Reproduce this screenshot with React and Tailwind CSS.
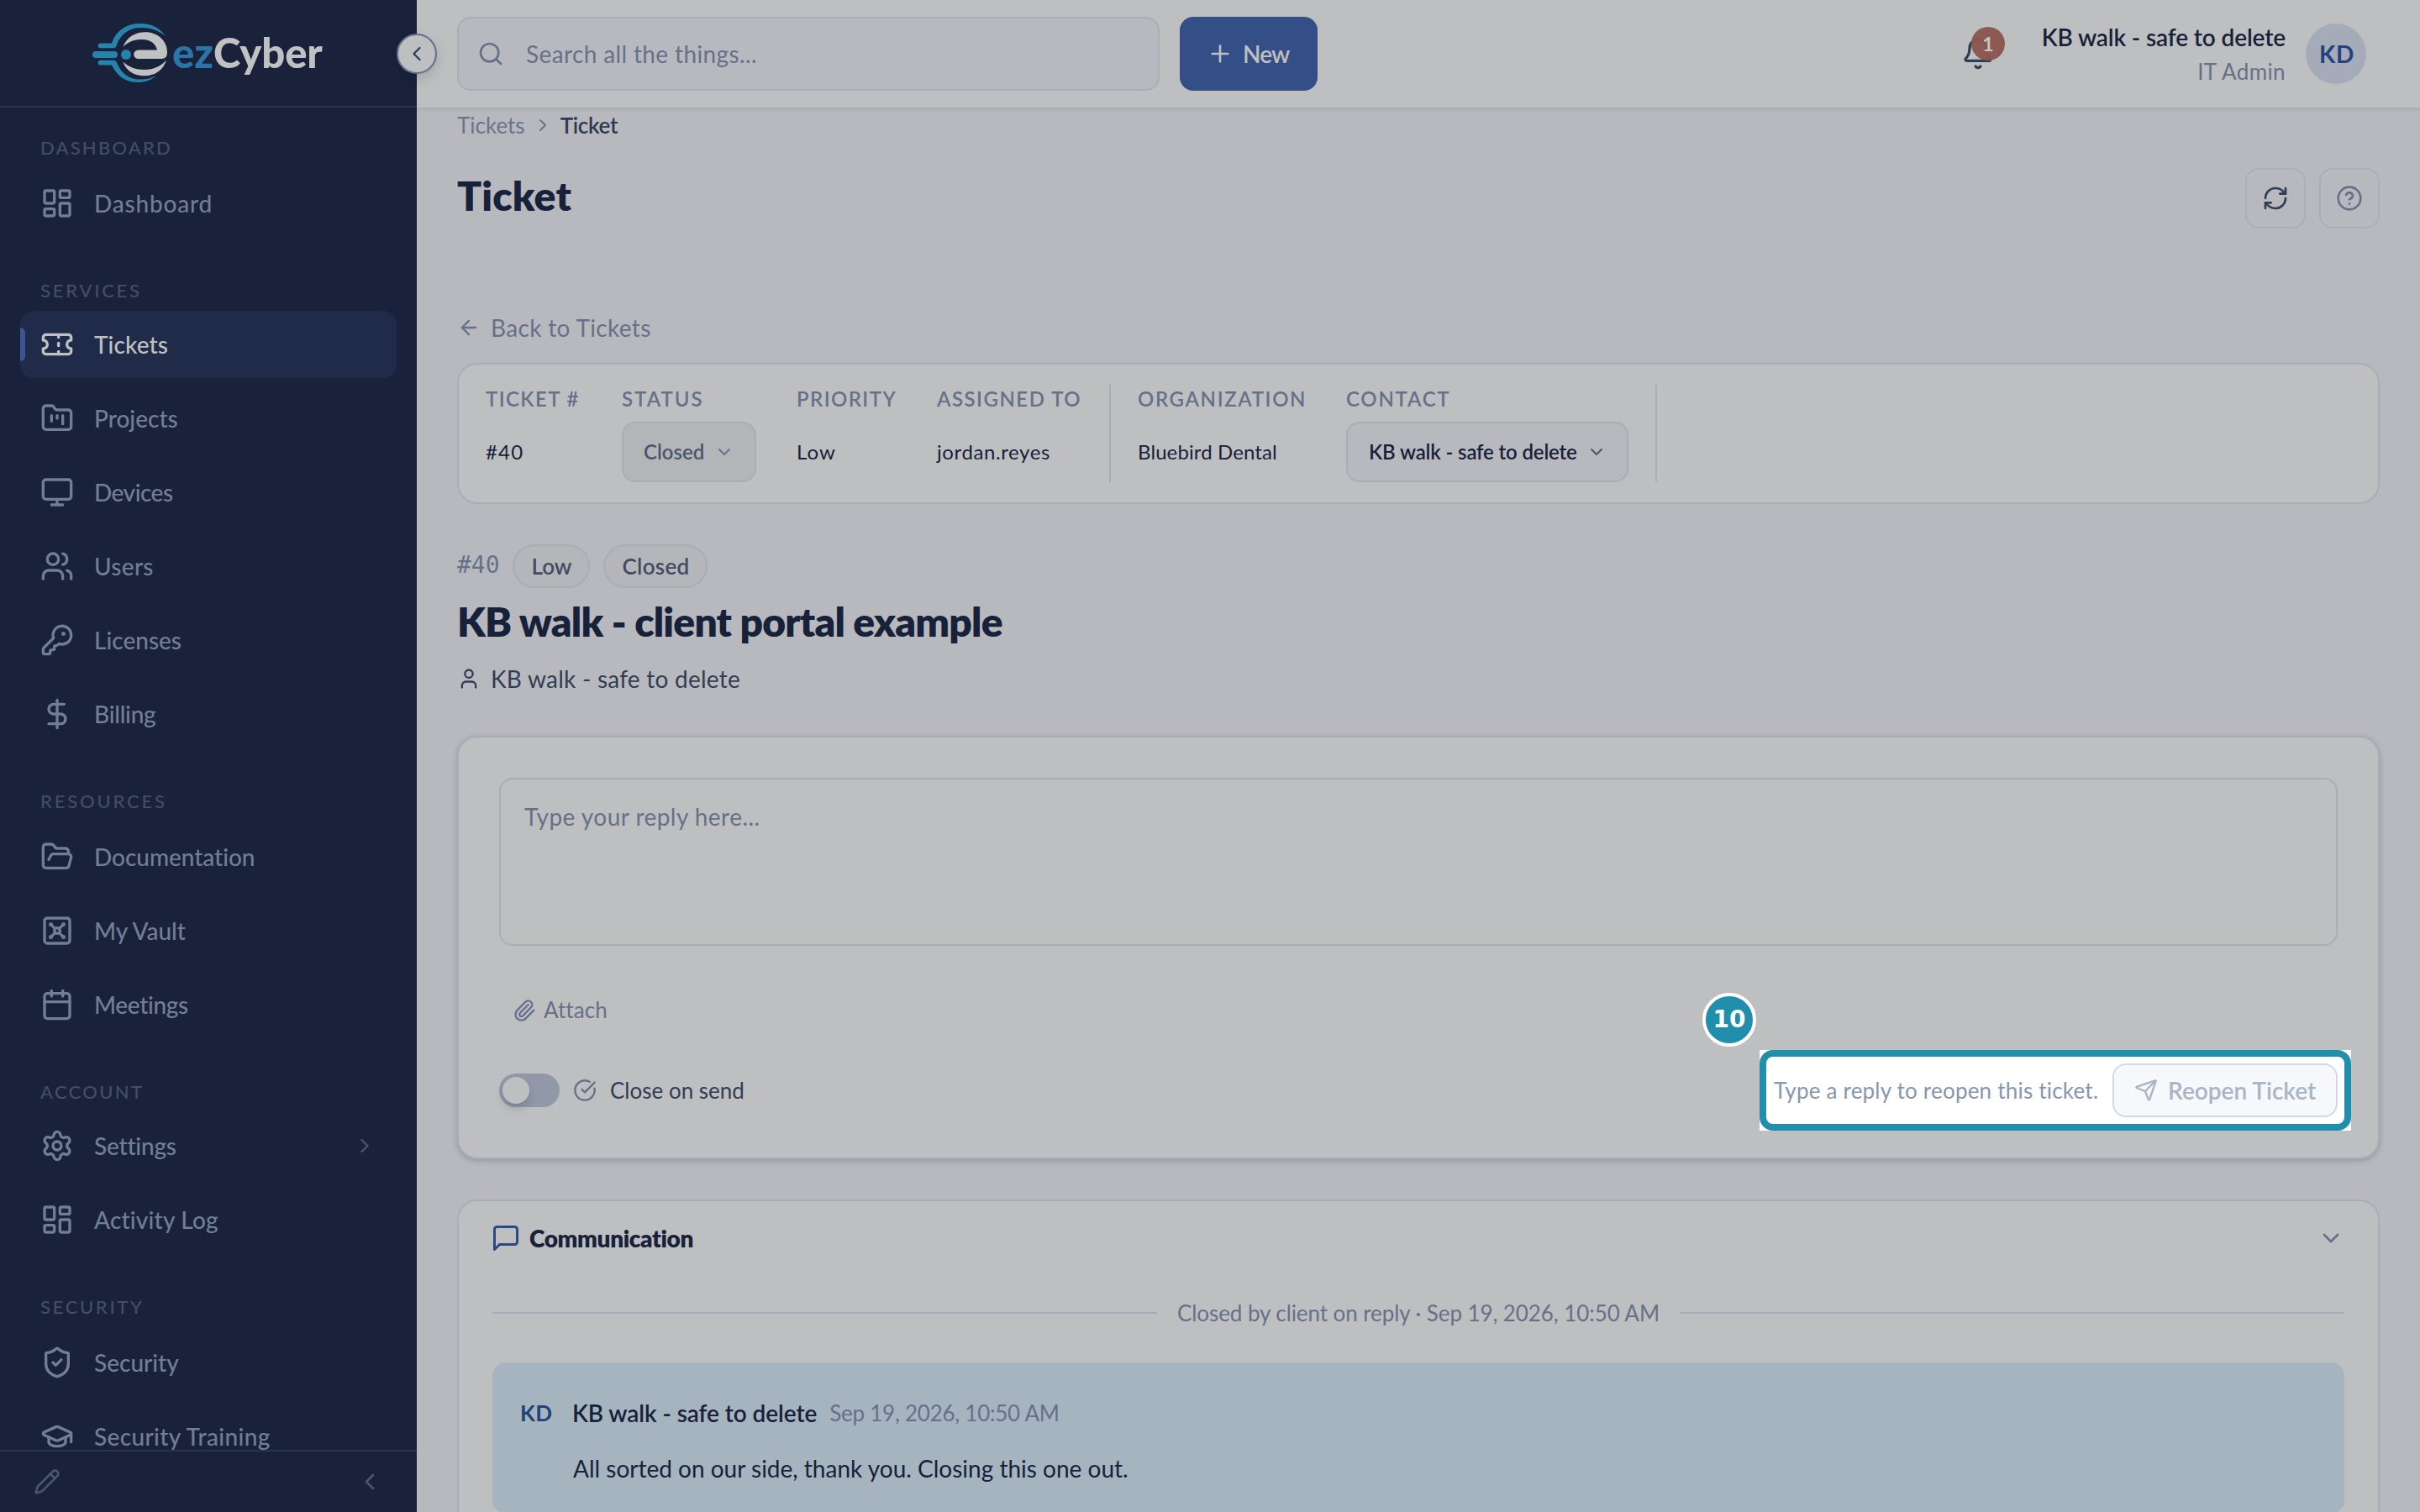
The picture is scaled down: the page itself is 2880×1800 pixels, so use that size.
import {
  ArrowLeft, Bell, Calendar, ChevronDown, ChevronLeft, ChevronRight, CircleCheckBig, CircleHelp,
  DollarSign, FolderKanban, FolderOpen, GraduationCap, KeyRound, LayoutDashboard, Monitor,
  Paperclip, Pencil, Plus, RefreshCw, Search, Send, Settings, ShieldCheck, Ticket, User, Users, Vault,
} from "lucide-react";

const sections = [
  {
    title: "DASHBOARD",
    heading: "mb-0.5 tracking-[2.2px]",
    items: [{ name: "Dashboard", icon: LayoutDashboard, tracking: "tracking-[0.8px]" }],
  },
  {
    title: "SERVICES",
    heading: "tracking-[2.76px]",
    items: [
      { name: "Tickets", icon: Ticket, active: true, tracking: "tracking-[0.1px]" },
      { name: "Projects", icon: FolderKanban, tracking: "tracking-[0px]" },
      { name: "Devices", icon: Monitor, tracking: "tracking-[-0.5px]" },
      { name: "Users", icon: Users, tracking: "tracking-[0.3px]" },
      { name: "Licenses", icon: KeyRound, tracking: "tracking-[0px]" },
      { name: "Billing", icon: DollarSign, tracking: "tracking-[-0.25px]" },
    ],
  },
  {
    title: "RESOURCES",
    heading: "mb-0.5 tracking-[2.82px]",
    items: [
      { name: "Documentation", icon: FolderOpen, tracking: "tracking-[-0.04px]" },
      { name: "My Vault", icon: Vault, tracking: "tracking-[-0.05px]" },
      { name: "Meetings", icon: Calendar, tracking: "tracking-[-0.35px]" },
    ],
  },
  {
    title: "ACCOUNT",
    heading: "tracking-[2.33px]",
    items: [
      { name: "Settings", icon: Settings, more: true, tracking: "tracking-[-0.2px]" },
      { name: "Activity Log", icon: LayoutDashboard, tracking: "tracking-[0.2px]" },
    ],
  },
  {
    title: "SECURITY",
    heading: "mb-0.5 tracking-[2.66px]",
    items: [
      { name: "Security", icon: ShieldCheck, tracking: "tracking-[0px]" },
      { name: "Security Training", icon: GraduationCap, tracking: "tracking-[0.36px]" },
    ],
  },
];

function Logo() {
  return (
    <div className="flex items-center">
      <svg width="92" height="74" viewBox="109 26 92 74">
        <g fill="#2583ac">
          <path d="M119.500 51.500H133C138 36 151 28 167 28C180 28 190 33 197 43C188 36 179 33 168 33C153 33 143 41 138.500 54.500C138 56.500 137 57.200 135 57.200H119.500A2.850 2.850 0 0 1 119.500 51.500Z" />
          <path d="M119.500 71.800H135C137 71.800 138 72.500 139 74.500C144 87 153 94.500 167 94.500C174 94.500 180 93 186 90C180 95.500 173 98 163 98C149 97.500 139 90.500 133 77.500H119.500A2.850 2.850 0 0 1 119.500 71.800Z" />
          <rect x="110" y="61" width="30" height="8" rx="4" />
          <circle cx="150" cy="65" r="6" />
        </g>
        <g fill="#bfc1c2">
          <path d="M146.500 55.500C151 44 161 38.300 173 38.300C188 38.300 199 49 199 62C199 67 197 70 192 70H164.500A5.300 5.300 0 0 1 164.500 59.400H187C185 51 178 47 169 47C160 47 153 49.500 146.500 55.500Z" />
          <path d="M146.500 73.500C153 80 162 83 172 83C183 83 191 79 198 71.500C194 84 184 90.300 172 90.300C160 90.300 150 84.500 146.500 73.500Z" />
        </g>
      </svg>
      <div className="ml-[4px] pb-[2px] text-[49px] leading-none font-black whitespace-nowrap">
        <span className="text-[#2b74a8]">ez</span>
        <span className="tracking-[-0.1px] text-[#bfc1c2]">Cyber</span>
      </div>
    </div>
  );
}

function Sidebar() {
  return (
    <aside className="relative flex h-full w-[496px] shrink-0 flex-col bg-[#19223a]">
      <div className="flex h-32 shrink-0 items-center border-b-2 border-[#28334f] pl-[109px]">
        <Logo />
      </div>
      <nav className="min-h-0 flex-1 overflow-hidden px-6 pt-6">
        {sections.map((section) => (
          <div key={section.title} className="mb-10">
            <div className={`flex h-12 items-center pb-[2px] pl-6 text-[22px] font-medium text-[#434e66] ${section.heading}`}>
              {section.title}
            </div>
            <div className="flex flex-col gap-2">
              {section.items.map((item) => (
                <div
                  key={item.name}
                  className={
                    item.active
                      ? "relative flex h-20 items-center overflow-hidden rounded-2xl bg-[#202b4a] px-6 text-[#bfc0c1]"
                      : "relative flex h-20 items-center px-6 text-[#717e95]"
                  }
                >
                  {item.active && <span className="absolute left-0 top-5 h-10 w-1.5 rounded-r-md bg-[#3f5591]" />}
                  <item.icon size={40} className="shrink-0" />
                  <span className={`ml-6 text-[28px] font-medium ${item.tracking}`}>{item.name}</span>
                  {item.more && <ChevronRight size={28} className="ml-auto text-[#4b566e]" />}
                </div>
              ))}
            </div>
          </div>
        ))}
      </nav>
      <div className="flex h-[74px] shrink-0 items-center justify-between border-t-2 border-[#28334f] pl-10 pr-10 text-[#4b566e]">
        <Pencil size={32} />
        <ChevronLeft size={32} />
      </div>
      <button className="absolute -right-6 top-10 z-10 flex size-12 items-center justify-center rounded-full border-2 border-[#667189] bg-[#bebfc0] text-[#313c55] shadow-[0_6px_14px_rgba(15,23,42,0.16)]">
        <ChevronLeft size={28} />
      </button>
    </aside>
  );
}

function Topbar() {
  return (
    <header className="flex h-32 shrink-0 items-center justify-between bg-[#bebfc0] pl-12 pr-16 shadow-[0_2px_4px_rgba(60,65,85,0.12)]">
      <div className="flex items-center gap-6">
        <div className="flex h-[88px] w-[836px] items-center rounded-2xl border-2 border-[#a9adb8] bg-[#b8b9be] pl-[22px] text-[#667189]">
          <Search size={32} />
          <span className="ml-[26px] text-[28px] tracking-[0.37px]">Search all the things...</span>
        </div>
        <button className="flex h-[88px] w-[164px] items-center rounded-2xl bg-[#344f87] pl-8 text-[#bebfc0]">
          <Plus size={32} />
          <span className="ml-[11px] text-[28px] font-semibold tracking-[-0.9px]">New</span>
        </button>
      </div>
      <div className="flex items-center">
        <div className="relative mr-14 text-[#313c55]">
          <Bell size={40} />
          <span className="absolute left-[12px] top-[-12px] flex size-10 items-center justify-center rounded-full bg-[#8a564f]/97 text-[23px] font-bold text-[#c9c4c0]">
            1
          </span>
        </div>
        <div className="flex w-[290px] flex-col items-end whitespace-nowrap">
          <span className="text-[28px] leading-[42px] font-semibold tracking-[-0.12px] text-[#17213a]">KB walk - safe to delete</span>
          <span className="text-[26px] leading-[40px] tracking-[0.4px] text-[#667189]">IT Admin</span>
        </div>
        <div className="ml-6 flex size-[72px] items-center justify-center rounded-full bg-[#a5abb9] pl-[2px] text-[28px] font-bold tracking-[0.8px] text-[#23427d]">
          KD
        </div>
      </div>
    </header>
  );
}

function Field({ label, tracking, width, children }) {
  return (
    <div className={`flex flex-col ${width}`}>
      <span className={`flex h-8 items-center pt-[2px] text-[24px] font-semibold whitespace-nowrap text-[#667189] ${tracking}`}>{label}</span>
      <div className="mt-3 flex h-[72px] items-center text-[24px] whitespace-nowrap text-[#17213a]">{children}</div>
    </div>
  );
}

function TicketInfo() {
  return (
    <div className="mt-[22px] flex h-[168px] rounded-3xl border-2 border-[#a8aeb8] bg-[#bebfc0] pl-8 pt-6">
      <div className="flex gap-12">
        <Field label="TICKET #" width="w-[114px]" tracking="tracking-[1.4px]">
          <span className="tracking-[1.2px]">#40</span>
        </Field>
        <Field label="STATUS" width="w-[160px]" tracking="tracking-[2px]">
          <div className="flex h-full w-full items-center justify-between rounded-2xl border-2 border-[#a9adb7] bg-[#b4b5b9] pl-6 pr-6 text-[#4a566e]">
            <span className="font-semibold">Closed</span>
            <ChevronDown size={24} className="text-[#667189]" />
          </div>
        </Field>
        <Field label="PRIORITY" width="w-[119px]" tracking="tracking-[1.4px]">
          <span className="tracking-[1px]">Low</span>
        </Field>
        <Field label="ASSIGNED TO" width="w-[173px]" tracking="tracking-[1.48px]">
          <span className="tracking-[0.6px]">jordan.reyes</span>
        </Field>
      </div>
      <div className="ml-8 h-[116px] w-0.5 bg-[#a8aeb8]" />
      <div className="ml-8 flex gap-12">
        <Field label="ORGANIZATION" width="w-[200px]" tracking="tracking-[1.62px]">
          <span className="tracking-[0.1px]">Bluebird Dental</span>
        </Field>
        <Field label="CONTACT" width="w-[336px]" tracking="tracking-[1.75px]">
          <div className="flex h-full w-full items-center justify-between rounded-2xl border-2 border-[#a9adb7] bg-[#b8b9be] pl-[25px] pr-6">
            <span className="font-semibold tracking-[-0.15px]">KB walk - safe to delete</span>
            <ChevronDown size={24} className="text-[#4a566e]" />
          </div>
        </Field>
      </div>
      <div className="ml-8 h-[116px] w-0.5 bg-[#a8aeb8]" />
    </div>
  );
}

function ReplyBox() {
  return (
    <div className="mt-12 rounded-3xl border-2 border-[#a8aeb8] bg-[#bebfc0] p-12 shadow-[0_2px_6px_rgba(50,58,80,0.28)]">
      <div className="h-[200px] rounded-2xl border-2 border-[#a8aeb8] px-7 pt-6 text-[28px] leading-10 tracking-[0.46px] text-[#667189]">
        Type your reply here...
      </div>
      <div className="mt-12 flex h-14 items-center pl-4 pt-[1px] text-[#667189]">
        <Paperclip size={28} />
        <span className="ml-[9px] text-[26px] tracking-[0.1px]">Attach</span>
      </div>
      <div className="mt-9 flex h-16 items-center justify-between">
        <div className="flex items-center">
          <div className="flex h-10 w-[72px] items-center rounded-full bg-[#9199a9] pl-1">
            <div className="size-8 rounded-full bg-[#bebfc0] shadow-[0_6px_10px_rgba(30,40,60,0.2)]" />
          </div>
          <CircleCheckBig size={28} className="ml-4 text-[#667189]" />
          <span className="ml-4 text-[26px] text-[#313c55]">Close on send</span>
        </div>
        <div className="relative flex items-center">
          <div className="absolute -inset-4 bg-white">
            <div className="h-full w-full rounded-2xl border-8 border-[#218eac]" />
          </div>
          <span className="relative w-[404px] pl-[1px] text-[26px] tracking-[0.21px] whitespace-nowrap text-[#8696ae]">
            Type a reply to reopen this ticket.
          </span>
          <button className="relative flex h-16 w-[268px] items-center rounded-2xl border-2 border-[#d0d9e7] bg-[#f6f8fc] pl-6 text-[#a9b5c3]">
            <Send size={28} />
            <span className="ml-[12px] text-[28px] font-semibold tracking-[0.02px]">Reopen Ticket</span>
          </button>
          <span className="absolute left-[-84px] top-[-84px] flex size-16 items-center justify-center rounded-full border-4 border-white bg-[#218eac] font-['DejaVu_Sans'] text-[28px] font-bold text-white">
            10
          </span>
        </div>
      </div>
    </div>
  );
}

function Communication() {
  return (
    <div className="mt-12 h-[460px] rounded-3xl border-2 border-[#a8aeb8] bg-[#bebfc0] px-10">
      <div className="flex h-[88px] items-center">
        <svg width="36" height="36" viewBox="0 0 24 24" fill="none" stroke="#2a4a85" strokeWidth="2" strokeLinecap="round" strokeLinejoin="round" className="-ml-0.5">
          <path d="M21 15a2 2 0 0 1-2 2H7l-4 4V5a2 2 0 0 1 2-2h14a2 2 0 0 1 2 2z" />
        </svg>
        <span className="ml-[10px] text-[28px] font-extrabold tracking-[-0.36px] text-[#17213a]">Communication</span>
        <ChevronDown size={32} className="ml-auto text-[#667189]" />
      </div>
      <div className="mt-[25px] flex h-10 items-center gap-6">
        <div className="h-0.5 flex-1 bg-[#a8aeb8]" />
        <span className="w-[574px] text-[26px] tracking-[-0.08px] whitespace-nowrap text-[#667189]">
          Closed by client on reply · Sep 19, 2026, 10:50 AM
        </span>
        <div className="h-0.5 flex-1 bg-[#a8aeb8]" />
      </div>
      <div className="mt-[39px] flex h-[180px] rounded-2xl bg-[#a6b4bf] pl-[33px] pt-10">
        <span className="w-[62px] text-[26px] leading-10 font-bold tracking-[0.4px] text-[#1f4379]">KD</span>
        <div>
          <div className="flex items-center text-[28px] leading-10">
            <span className="font-semibold tracking-[-0.08px] text-[#17213a]">KB walk - safe to delete</span>
            <span className="ml-[15px] text-[26px] tracking-[-0.25px] text-[#667189]">Sep 19, 2026, 10:50 AM</span>
          </div>
          <p className="mt-6 pl-[1px] text-[28px] leading-[44px] text-[#17213a]">All sorted on our side, thank you. Closing this one out.</p>
        </div>
      </div>
    </div>
  );
}

export default function App() {
  return (
    <div className="flex h-[1800px] w-[2880px] overflow-hidden bg-[#b8b9be] font-['Lato','Open_Sans',sans-serif]">
      <Sidebar />
      <div className="flex min-w-0 flex-1 flex-col">
        <Topbar />
        <main className="min-h-0 flex-1 overflow-hidden px-12 pt-[5px]">
          <div className="flex h-8 items-center text-[26px] text-[#6b7589]">
            <span>Tickets</span>
            <ChevronRight size={24} className="ml-[9px]" />
            <span className="ml-[9px] font-semibold tracking-[-0.3px] text-[#2f3a52]">Ticket</span>
          </div>
          <div className="mt-[35px] flex h-[72px] items-center justify-between">
            <h1 className="pb-[7px] text-[48px] leading-none font-extrabold tracking-[0.2px] text-[#17213a]">Ticket</h1>
            <div className="flex gap-4">
              <button className="flex size-[72px] items-center justify-center rounded-2xl border-2 border-[#a9aeb8] text-[#313c55]">
                <RefreshCw size={32} />
              </button>
              <button className="flex size-[72px] items-center justify-center rounded-2xl border-2 border-[#a9aeb8] text-[#667189]">
                <CircleHelp size={32} />
              </button>
            </div>
          </div>
          <div className="mt-[98px] flex h-10 items-center text-[#667189]">
            <ArrowLeft size={28} />
            <span className="ml-[12px] text-[28px] tracking-[0.34px]">Back to Tickets</span>
          </div>
          <TicketInfo />
          <div className="mt-12 flex h-[52px] items-center gap-4">
            <span className="w-[50px] pb-[2px] font-['DejaVu_Sans_Mono'] text-[28px] text-[#667189]">#40</span>
            <span className="flex h-[52px] w-[92px] items-center justify-center rounded-full border-2 border-[#a9adb7] bg-[#b5b6ba] pl-[1px] text-[26px] font-semibold text-[#414c64]">
              Low
            </span>
            <span className="flex h-[52px] w-[124px] items-center justify-center rounded-full border-2 border-[#a9adb7] bg-[#b5b6ba] pl-[1px] text-[26px] font-semibold tracking-[0.3px] text-[#414c64]">
              Closed
            </span>
          </div>
          <h2 className="mt-[10px] text-[48px] leading-[60px] font-extrabold tracking-[-0.82px] text-[#17213a]">
            KB walk - client portal example
          </h2>
          <div className="mt-[18px] flex h-10 items-center text-[#313c55]">
            <User size={28} />
            <span className="ml-[12px] text-[28px] tracking-[0.24px]">KB walk - safe to delete</span>
          </div>
          <ReplyBox />
          <Communication />
        </main>
      </div>
    </div>
  );
}
